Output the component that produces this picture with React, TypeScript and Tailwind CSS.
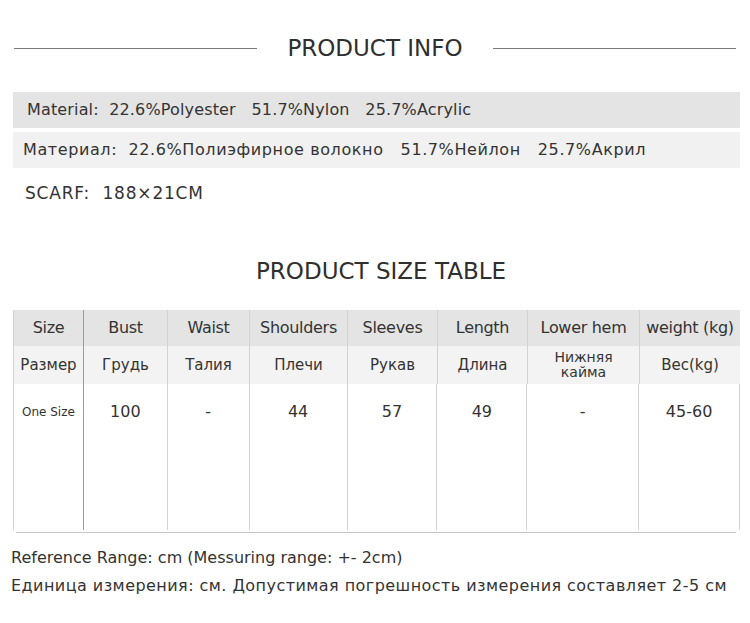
import React from 'react';

const cols = [
  { w: 'w-[70px]', en: 'Size', ru: 'Размер', v: 'One Size' },
  { w: 'w-[84px]', en: 'Bust', ru: 'Грудь', v: '100' },
  { w: 'w-[82px]', en: 'Waist', ru: 'Талия', v: '-' },
  { w: 'w-[98px]', en: 'Shoulders', ru: 'Плечи', v: '44' },
  { w: 'w-[90px]', en: 'Sleeves', ru: 'Рукав', v: '57' },
  { w: 'w-[90px]', en: 'Length', ru: 'Длина', v: '49' },
  { w: 'w-[112px]', en: 'Lower hem', ru: 'Нижняя\nкайма', v: '-' },
  { w: 'w-[101px]', en: 'weight (kg)', ru: 'Вес(kg)', v: '45-60' },
];

const Title = ({ text, lines }: { text: string; lines?: boolean }) => (
  <div className="flex items-center h-[30px] px-[14px] gap-[30px]">
    {lines ? <div className="flex-1 h-px bg-[#7a7a7a]" /> : <div className="flex-1" />}
    <div className="text-[23px] text-[#2f2f2f] whitespace-nowrap">{text}</div>
    {lines ? <div className="flex-1 h-px bg-[#7a7a7a]" /> : <div className="flex-1" />}
  </div>
);

const App = () => {
  return (
    <div className="w-[750px] h-[623px] bg-white text-[#333] overflow-hidden" style={{ fontFamily: '"DejaVu Sans", sans-serif' }}>
      <div className="pt-[33px]">
        <Title text="PRODUCT INFO" lines />
      </div>

      {/* материал */}
      <div className="mt-[29px] ml-[13px] w-[727px] flex flex-col gap-[4px]">
        <div className="h-[36px] bg-[#e4e4e4] flex items-center pl-[14px] text-[16px] tracking-[0.15px] whitespace-pre">
          Material:  22.6%Polyester   51.7%Nylon   25.7%Acrylic
        </div>
        <div className="h-[36px] bg-[#f1f1f1] flex items-center pl-[10px] text-[16px] tracking-[0.6px] whitespace-pre">
          Материал:  22.6%Полиэфирное волокно   51.7%Нейлон   25.7%Акрил
        </div>
      </div>
      <div className="mt-[14px] ml-[25px] h-[24px] flex items-center text-[17px] tracking-[0.8px] whitespace-pre">
        SCARF:  188×21CM
      </div>

      <div className="mt-[50px] ml-[12px]">
        <Title text="PRODUCT SIZE TABLE" />
      </div>

      {/* таблица */}
      <div className="mt-[24px] ml-[13px] w-[727px]">
        <div className="flex h-[36px] bg-[#e4e4e4]">
          {cols.map((c, i) => (
            <div
              key={i}
              className={`${c.w} flex items-center justify-center text-[16px] tracking-[-0.3px] whitespace-nowrap border-l ${i === 1 ? 'border-[#9a9a9a]' : 'border-[#d2d2d2]'}`}
            >
              {c.en}
            </div>
          ))}
        </div>
        <div className="flex h-[38px] bg-[#f3f3f3]">
          {cols.map((c, i) => (
            <div
              key={i}
              className={`${c.w} flex items-center justify-center text-center border-l ${i === 1 ? 'border-[#9a9a9a]' : 'border-[#d2d2d2]'} ${c.ru.includes('\n') ? 'text-[14px] leading-[15px] whitespace-pre' : 'text-[15px]'}`}
            >
              {c.ru}
            </div>
          ))}
        </div>
        <div className="flex h-[146px] border-r border-[#d2d2d2]">
          {cols.map((c, i) => (
            <div
              key={i}
              className={`${c.w} flex justify-center border-l ${i === 1 ? 'border-[#9a9a9a]' : 'border-[#d2d2d2]'} ${i === 0 ? 'text-[12px] pt-[19px]' : 'text-[16px] pt-[16px]'}`}
            >
              {c.v}
            </div>
          ))}
        </div>
        <div className="ml-[3px] w-[720px] h-px bg-[#c8c8c8] mt-[2px]" />
      </div>

      <div className="mt-[11px] ml-[11px] text-[16px] leading-[28px] text-[#333]">
        <div>Reference Range: cm (Messuring range: +- 2cm)</div>
        <div className="tracking-[0.45px]">Единица измерения: см. Допустимая погрешность измерения составляет 2-5 см</div>
      </div>
    </div>
  );
};

export default App;
